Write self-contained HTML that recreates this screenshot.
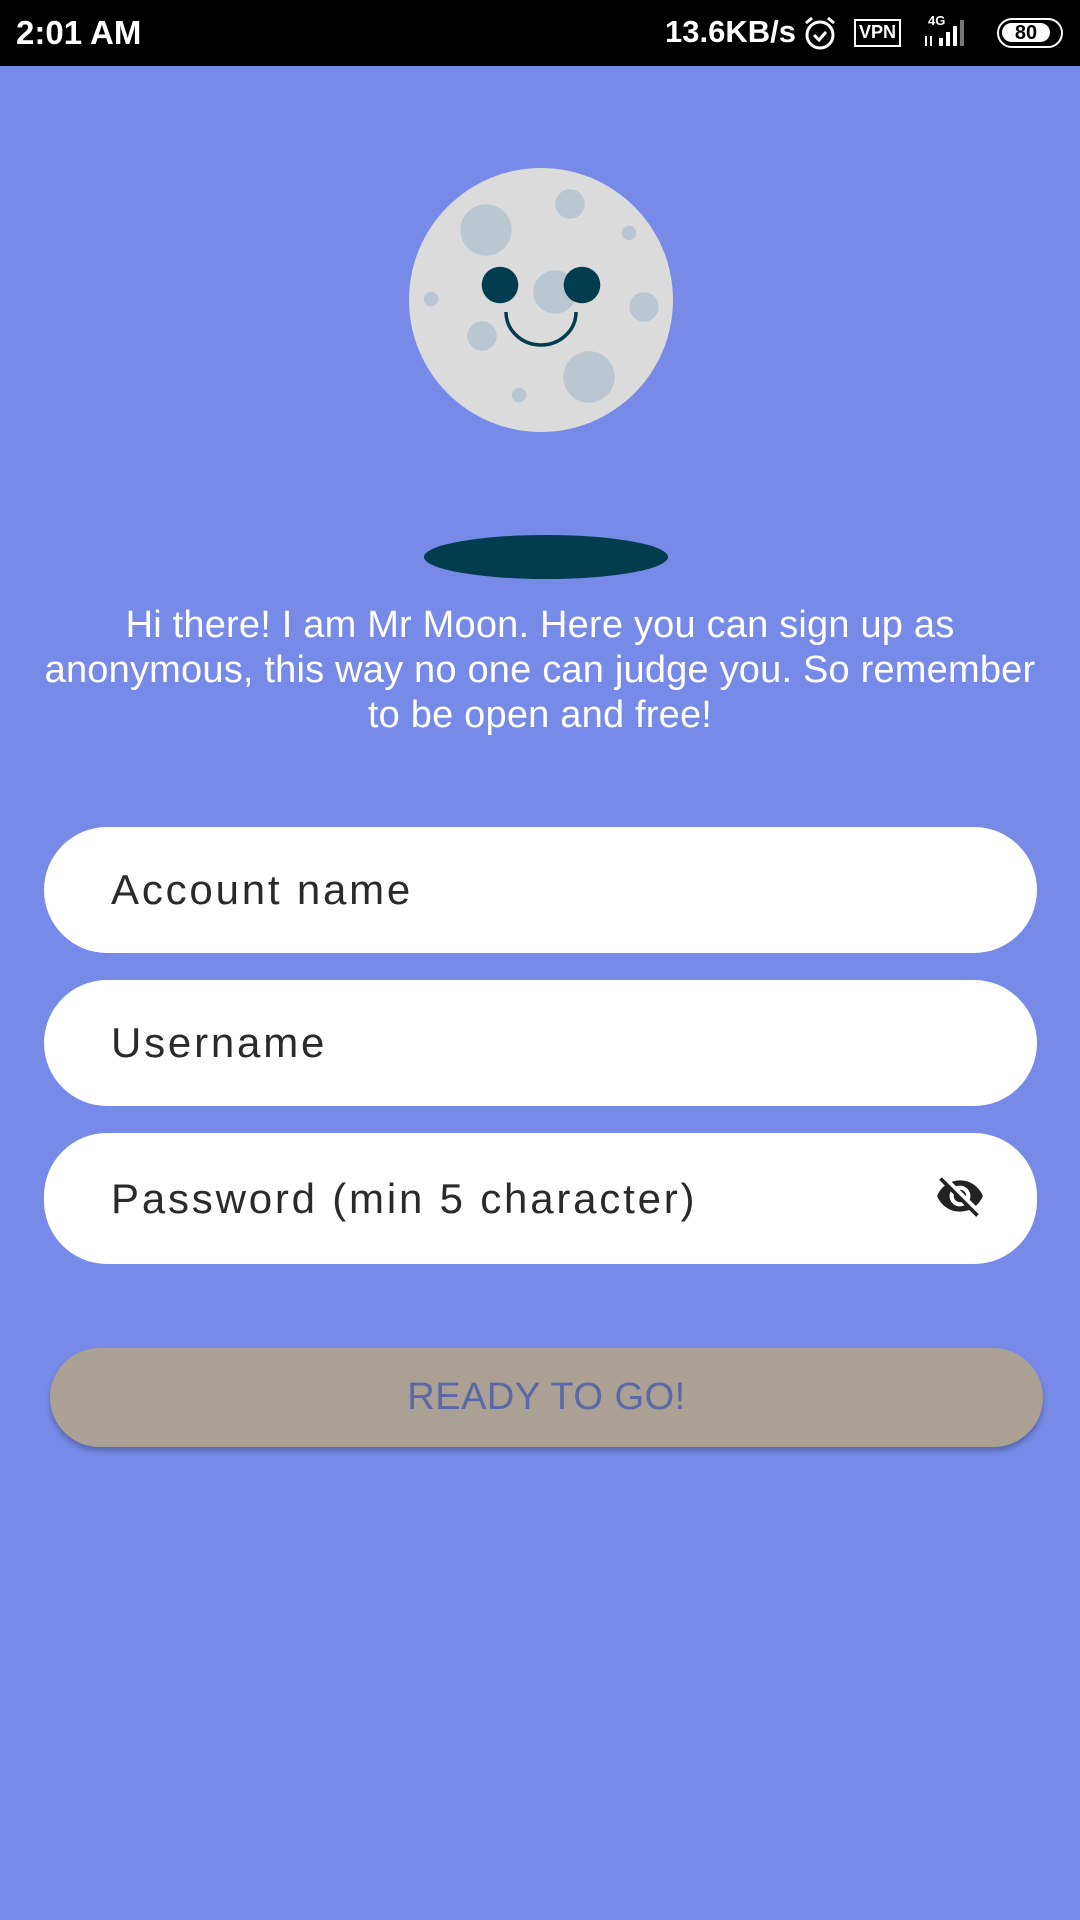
<!DOCTYPE html>
<html><head><meta charset="utf-8"><style>
*{margin:0;padding:0;box-sizing:border-box}
html,body{width:1080px;height:1920px;overflow:hidden;background:#778ae8;font-family:"Liberation Sans",sans-serif}
.sb{position:absolute;left:0;top:0;width:1080px;height:66px;background:#000;color:#fff}
.txt{position:absolute;left:0;width:1080px;top:603px;text-align:center;color:#fff;font-size:38px;line-height:45px;letter-spacing:0.2px;white-space:nowrap}
.field{position:absolute;left:44px;width:993px;background:#fff;border-radius:63px;color:#2a2a2a;font-size:42px;letter-spacing:2.8px;padding-left:67px;display:flex;align-items:center}
.btn{position:absolute;left:50px;top:1348px;width:993px;height:99px;border-radius:50px;background:#aba094;box-shadow:0 4px 6px rgba(0,0,0,.25);color:#5b67a6;font-size:38px;text-align:center;line-height:99px;letter-spacing:0.5px}
</style></head><body>
<div class="sb">
<div style="position:absolute;left:16px;top:14px;font-size:33px;font-weight:bold">2:01 AM</div>
<div style="position:absolute;left:665px;top:14px;font-size:31px;font-weight:bold">13.6KB/s</div>
<svg style="position:absolute;left:803px;top:15px" width="34" height="36" viewBox="0 0 34 36"><circle cx="17" cy="20" r="13" fill="none" stroke="#fff" stroke-width="3"/><path d="M11 20l5 5 7-8" fill="none" stroke="#fff" stroke-width="3"/><path d="M3 8l6-5M31 8l-6-5" stroke="#fff" stroke-width="3"/></svg>
<div style="position:absolute;left:854px;top:19px;width:47px;height:28px;border:2.5px solid #fff;font-size:18px;font-weight:bold;text-align:center;line-height:23px">VPN</div>
<div style="position:absolute;left:928px;top:13px;font-size:13px;font-weight:bold">4G</div>
<svg style="position:absolute;left:922px;top:18px" width="60" height="30" viewBox="0 0 60 30"><rect x="17" y="20" width="4" height="8" fill="#fff"/><rect x="24" y="14" width="4" height="14" fill="#fff"/><rect x="31" y="8" width="4" height="20" fill="#fff"/><rect x="38" y="2" width="4" height="26" fill="#777"/><path d="M4 18v10M9 18v10" stroke="#fff" stroke-width="2"/></svg>
<div style="position:absolute;left:997px;top:18px;width:66px;height:30px;border:2.5px solid #fff;border-radius:15px"><div style="position:absolute;left:3px;top:3px;width:48px;height:19px;background:#fff;border-radius:10px;color:#000;font-size:20px;font-weight:bold;text-align:center;line-height:20px">80</div></div>
</div>
<svg style="position:absolute;left:0;top:0" width="1080" height="600" viewBox="0 0 1080 600">
<circle cx="541" cy="300" r="132" fill="#dbdbdc"/>
<g fill="#bac7d0">
<circle cx="486" cy="230" r="25.7"/><circle cx="570" cy="204" r="14.7"/><circle cx="629" cy="233" r="7.3"/>
<circle cx="555" cy="292" r="21.7"/><circle cx="431" cy="299" r="7.3"/><circle cx="644" cy="307" r="14.7"/>
<circle cx="482" cy="336" r="14.7"/><circle cx="589" cy="377" r="25.7"/><circle cx="519" cy="395" r="7.3"/>
</g>
<circle cx="500" cy="285" r="18.3" fill="#023d4f"/><circle cx="582" cy="285" r="18.3" fill="#023d4f"/>
<path d="M506 312a35 33 0 0 0 70 0" fill="none" stroke="#023d4f" stroke-width="3.5"/>
<ellipse cx="546" cy="557" rx="122" ry="22" fill="#023d4f"/>
</svg>
<div class="txt">Hi there! I am Mr Moon. Here you can sign up as<br>anonymous, this way no one can judge you. So remember<br>to be open and free!</div>
<div class="field" style="top:827px;height:126px">Account name</div>
<div class="field" style="top:980px;height:126px">Username</div>
<div class="field" style="top:1133px;height:131px">Password (min 5 character)
<svg style="position:absolute;left:891px;top:38px" width="50" height="50" viewBox="0 0 24 24"><path fill="#222" d="M12 7c2.76 0 5 2.240 5 5 0 .65-.13 1.26-.36 1.83l2.92 2.92c1.51-1.26 2.7-2.89 3.43-4.75-1.730-4.39-6-7.5-11-7.5-1.4 0-2.74.25-3.98.7l2.16 2.16C10.74 7.13 11.35 7 12 7zM2 4.27l2.28 2.28.46.46C3.08 8.3 1.78 10.02 1 12c1.73 4.39 6 7.5 11 7.5 1.55 0 3.03-.3 4.38-.84l.42.42L19.73 22 21 20.73 3.27 3 2 4.27zM7.53 9.8l1.55 1.55c-.05.21-.08.43-.08.65 0 1.66 1.34 3 3 3 .22 0 .44-.03.65-.08l1.55 1.55c-.67.33-1.41.53-2.2.53-2.76 0-5-2.24-5-5 0-.79.2-1.53.53-2.2zm4.31-.78l3.15 3.15.02-.16c0-1.66-1.34-3-3-3l-.17.01z"/></svg>
</div>
<div class="btn">READY TO GO!</div>
</body></html>
